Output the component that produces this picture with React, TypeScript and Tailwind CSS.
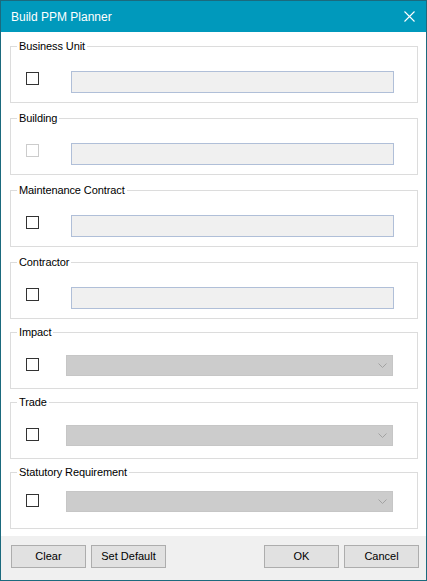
import React from "react";

type Field = {
    label: string;
    kind: "text" | "combo";
    gap: number; // margin above the group box
    disabled?: boolean;
    compact?: boolean;
};

const fields: Field[] = [
    { label: "Business Unit", kind: "text", gap: 14 },
    { label: "Building", kind: "text", gap: 15, disabled: true },
    { label: "Maintenance Contract", kind: "text", gap: 15 },
    { label: "Contractor", kind: "text", gap: 15 },
    { label: "Impact", kind: "combo", gap: 13 },
    { label: "Trade", kind: "combo", gap: 13 },
    { label: "Statutory Requirement", kind: "combo", gap: 13, compact: true },
];

const CheckBox = ({ disabled, className }: { disabled?: boolean; className: string }) => (
    <div className={`w-[13px] h-[13px] shrink-0 bg-white border ${disabled ? "border-[#cccccc]" : "border-[#333333]"} ${className}`} />
);

const TextBox = () => (
    <div className="ml-[32px] mt-[24px] w-[323px] h-[22px] bg-[#f0f0f0] border border-[#b0bfd8]" />
);

const ComboBox = ({ compact }: { compact?: boolean }) => (
    <div className={`ml-[27px] ${compact ? "mt-[18px]" : "mt-[22px]"} w-[327px] h-[21px] bg-[#cccccc] border border-[#c6c6c6] flex items-center justify-end pr-[5px]`}>
        <svg width="9" height="5" viewBox="0 0 9 5" fill="none">
            <path d="M0.5 0.5 L4.5 4.5 L8.5 0.5" stroke="#a2a2a2" strokeWidth="1" />
        </svg>
    </div>
);

const GroupBox = ({ field }: { field: Field }) => {
    const marginTop = {
        13: "mt-[13px]",
        14: "mt-[14px]",
        15: "mt-[15px]",
    }[field.gap];

    return (
        <div className={`relative ${marginTop} ml-[9px] w-[408px] h-[57px] border border-[#dcdcdc] flex items-start pl-[15px]`}>
            <span className="absolute -top-[7px] left-[6px] px-[2px] bg-white text-[11px] leading-[13px] text-black tracking-[-0.1px]">
                {field.label}
            </span>
            <CheckBox
                disabled={field.disabled}
                className={field.compact ? "mt-[21px]" : "mt-[25px]"}
            />
            {field.kind === "text" ? <TextBox /> : <ComboBox compact={field.compact} />}
        </div>
    );
};

const Button = ({ children, className = "" }: { children: React.ReactNode; className?: string }) => (
    <button className={`w-[75px] h-[23px] bg-[#e1e1e1] border border-[#adadad] text-[11px] text-black flex items-center justify-center ${className}`}>
        {children}
    </button>
);

export default function App() {
    return (
        <div
            className="w-[427px] h-[581px] border border-[#1b6a7e] flex flex-col bg-white"
            style={{ fontFamily: '"Liberation Sans", Arial, sans-serif' }}
        >
            <div className="h-[31px] bg-[#0099bc] flex items-center justify-between pl-[10px] pr-[11px] shrink-0">
                <span className="text-white text-[12px]">
                    Build PPM Planner
                </span>
                <svg width="11" height="11" viewBox="0 0 11 11" fill="none">
                    <path d="M0.5 0.5 L10.5 10.5 M10.5 0.5 L0.5 10.5" stroke="#ffffff" strokeWidth="1.1" />
                </svg>
            </div>

            <div className="flex-1 flex flex-col">
                {fields.map((f) => (
                    <GroupBox key={f.label} field={f} />
                ))}
            </div>

            <div className="h-[44px] shrink-0 bg-[#f0f0f0] flex items-start pt-[9px] pl-[10px] pr-[7px]">
                <Button>Clear</Button>
                <Button className="ml-[5px]">Set Default</Button>
                <Button className="ml-auto">OK</Button>
                <Button className="ml-[5px]">Cancel</Button>
            </div>
        </div>
    );
}
